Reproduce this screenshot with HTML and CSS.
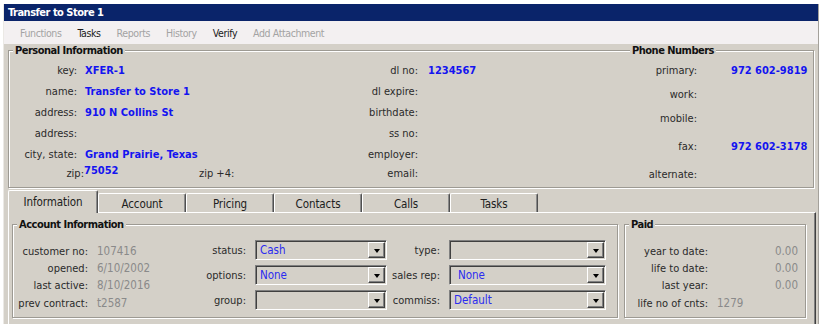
FILE: index.html
```html
<!DOCTYPE html>
<html>
<head>
<meta charset="utf-8">
<link rel="stylesheet" href="styles.css">
</head>
<body>
<div class="window">
  <div class="titlebar">Transfer to Store 1</div>
  <div class="menubar">
    <span class="mi off">Functions</span>
    <span class="mi">Tasks</span>
    <span class="mi off">Reports</span>
    <span class="mi off">History</span>
    <span class="mi">Verify</span>
    <span class="mi off">Add Attachment</span>
  </div>
  <div class="content">
    <div class="group pi">
      <div class="group-head">
        <span class="gh-title first">Personal Information</span>
        <span class="gh-title phone-title">Phone Numbers</span>
      </div>
      <div class="pi-body">
        <div class="pi-main">
          <div class="lbl">key:</div><div class="val blue">XFER-1</div>
          <div class="lbl">dl no:</div><div class="val2 blue">1234567</div>

          <div class="lbl">name:</div><div class="val blue">Transfer to Store 1</div>
          <div class="lbl">dl expire:</div><div class="val2"></div>

          <div class="lbl">address:</div><div class="val blue">910 N Collins St</div>
          <div class="lbl">birthdate:</div><div class="val2"></div>

          <div class="lbl">address:</div><div class="val"></div>
          <div class="lbl">ss no:</div><div class="val2"></div>

          <div class="lbl">city, state:</div><div class="val blue">Grand Prairie, Texas</div>
          <div class="lbl">employer:</div><div class="val2"></div>

          <div class="zip-row">
            <span class="zip-lbl">zip:</span>
            <span class="zip-val blue">75052</span>
            <span class="zip4">zip +4:</span>
          </div>
          <div class="lbl">email:</div><div class="val2"></div>
        </div>
        <div class="pi-phone">
          <div class="lbl">primary:</div><div class="pval blue">972 602-9819</div>
          <div class="lbl">work:</div><div class="pval"></div>
          <div class="lbl">mobile:</div><div class="pval"></div>
          <div class="lbl">fax:</div><div class="pval blue">972 602-3178</div>
          <div class="lbl">alternate:</div><div class="pval"></div>
        </div>
      </div>
    </div>

    <div class="tabs">
      <div class="tab selected">Information</div>
      <div class="tab">Account</div>
      <div class="tab">Pricing</div>
      <div class="tab">Contacts</div>
      <div class="tab">Calls</div>
      <div class="tab">Tasks</div>
    </div>
    <div class="panel">
      <div class="group acct">
        <div class="group-head">
          <span class="gh-title first">Account Information</span>
        </div>
        <div class="acct-body">
          <div class="acct-a">
            <div class="lbl">customer no:</div><div class="gval">107416</div>
            <div class="lbl">opened:</div><div class="gval">6/10/2002</div>
            <div class="lbl">last active:</div><div class="gval">8/10/2016</div>
            <div class="lbl">prev contract:</div><div class="gval">t2587</div>
          </div>
          <div class="acct-b">
            <div class="lbl">status:</div>
            <div class="combo"><span class="ctext">Cash</span><span class="cbtn"><i></i></span></div>
            <div class="lbl">options:</div>
            <div class="combo"><span class="ctext">None</span><span class="cbtn"><i></i></span></div>
            <div class="lbl">group:</div>
            <div class="combo"><span class="ctext"></span><span class="cbtn"><i></i></span></div>
          </div>
          <div class="acct-c">
            <div class="lbl">type:</div>
            <div class="combo wide"><span class="ctext"></span><span class="cbtn"><i></i></span></div>
            <div class="lbl">sales rep:</div>
            <div class="combo wide"><span class="ctext indent">None</span><span class="cbtn"><i></i></span></div>
            <div class="lbl">commiss:</div>
            <div class="combo wide"><span class="ctext">Default</span><span class="cbtn"><i></i></span></div>
          </div>
        </div>
      </div>
      <div class="group paid">
        <div class="group-head">
          <span class="gh-title first">Paid</span>
        </div>
        <div class="paid-body">
          <div class="lbl">year to date:</div><div class="gval num">0.00</div>
          <div class="lbl">life to date:</div><div class="gval num">0.00</div>
          <div class="lbl">last year:</div><div class="gval num">0.00</div>
          <div class="lbl">life no of cnts:</div><div class="gval">1279</div>
        </div>
      </div>
    </div>
  </div>
</div>
</body>
</html>
```
FILE: styles.css
```css
* { box-sizing: border-box; }
html, body {
  margin: 0;
  padding: 0;
  background: #ffffff;
}
body {
  font-family: "DejaVu Sans Condensed", "DejaVu Sans", sans-serif;
  font-size: 11px;
  color: #2a2a2a;
  height: 324px;
  overflow: hidden;
}
.window {
  margin: 4px 0 0 3px;
  width: 816px;
  height: 330px;
  background: #d4d0c8;
  border-left: 1px solid #ebe9e5;
  border-right: 1px solid #a4a19b;
}
.titlebar {
  height: 17px;
  line-height: 17px;
  background: #0a246a;
  color: #ffffff;
  font-weight: bold;
  font-size: 11px;
  letter-spacing: -0.5px;
  padding-left: 4px;
}
.menubar {
  height: 23px;
  background: #f3f0f1;
  display: flex;
  align-items: center;
  gap: 16px;
  padding-left: 16px;
  font-size: 10.5px;
  letter-spacing: -0.4px;
}
.mi { color: #1b1b1b; }
.mi.off { color: #a3a3a3; }

.content {
  padding: 0 4px;
}

/* group boxes */
.group {
  border: 1px solid #9d9a93;
  box-shadow: inset 1px 1px 0 #ffffff, 1px 1px 0 #ffffff;
  margin-top: 6px;
}
.group-head {
  display: flex;
  height: 13px;
  margin-top: -7px;
  line-height: 13px;
  font-weight: bold;
  font-size: 11px;
  letter-spacing: -0.5px;
  color: #111111;
}
.gh-title {
  background: #d4d0c8;
  padding: 0 2px;
}
.gh-title.first { margin-left: 4px; }
.phone-title { margin-left: auto; margin-right: 97px; }

.lbl {
  display: flex;
  align-items: center;
  justify-content: flex-end;
  white-space: nowrap;
}
.blue {
  color: #1414f0;
  font-weight: bold;
}

/* personal info */
.pi-body {
  display: flex;
  height: 130px;
}
.pi-main {
  margin-top: 3px;
  display: grid;
  grid-template-columns: 68px 245px 96px 170px;
  grid-template-rows: 20px 22px 21px 20px 22px 16px;
}
.val, .val2, .pval {
  display: flex;
  align-items: center;
  white-space: nowrap;
}
.val { padding-left: 8px; }
.val2 { padding-left: 10px; }
.pval { padding-left: 34px; }
.zip-row {
  grid-column: 1 / 3;
  display: flex;
  align-items: center;
}
.zip-lbl {
  width: 75px;
  text-align: right;
}
.zip-val {
  width: 115px;
  margin-bottom: 6px;
}
.pi-phone {
  margin-top: 1px;
  display: grid;
  grid-template-columns: 109px 1fr;
  grid-template-rows: 24px 24px 24px 32px 24px;
  flex: 1;
}

/* tabs */
.tabs {
  display: flex;
  align-items: flex-end;
  height: 24px;
  position: relative;
  z-index: 1;
}
.tab {
  width: 88px;
  height: 19px;
  padding-top: 2px;
  line-height: 16px;
  text-align: center;
  font-size: 11.5px;
  letter-spacing: -0.1px;
  color: #202020;
  border-top: 1px solid #ffffff;
  border-left: 1px solid #ffffff;
  border-right: 1px solid #505050;
  box-shadow: inset -1px 0 0 #8a8a8a;
  border-radius: 2px 2px 0 0;
  background: #d4d0c8;
}
.tab.selected {
  width: 90px;
  height: 23px;
  padding-top: 2px;
  line-height: 18px;
  margin-bottom: -1px;
}
.panel {
  display: flex;
  gap: 6px;
  margin-right: -2px;
  height: 120px;
  padding-left: 3px;
  border-top: 1px solid #ffffff;
  border-left: 1px solid #ffffff;
  border-right: 1px solid #404040;
  box-shadow: inset -1px 0 0 #808080;
}
.panel .group {
  margin-top: 11px;
  height: 94px;
}
.acct { width: 606px; }
.paid { width: 182px; }

.gval {
  display: flex;
  align-items: center;
  color: #8a8a8a;
  font-size: 11.5px;
  padding-left: 9px;
  white-space: nowrap;
}

.acct-body {
  display: flex;
}
.acct-a {
  margin-top: 11px;
  width: 177px;
  display: grid;
  grid-template-columns: 75px 1fr;
  grid-template-rows: 18px 16px 18px 18px;
}
.acct-b, .acct-c {
  margin-top: 9px;
  display: grid;
  row-gap: 5px;
  grid-template-rows: 20px 20px 20px;
}
.acct-b { grid-template-columns: 56px 132px; column-gap: 9px; }
.acct-c { grid-template-columns: 53px 157px; column-gap: 9px; }

.combo {
  display: flex;
  align-items: center;
  border: 1px solid;
  border-color: #808080 #ffffff #ffffff #808080;
  box-shadow: inset 1px 1px 0 #404040;
  padding: 1px;
}
.ctext {
  flex: 1;
  padding-left: 3px;
  color: #2b2bf0;
  font-size: 11.5px;
  white-space: nowrap;
}
.ctext.indent { padding-left: 7px; }
.cbtn {
  width: 17px;
  height: 16px;
  border: 1px solid;
  border-color: #ffffff #404040 #404040 #ffffff;
  box-shadow: inset -1px -1px 0 #808080;
  background: #d4d0c8;
  display: flex;
  align-items: center;
  justify-content: center;
}
.cbtn i {
  width: 0;
  height: 0;
  border-left: 3.5px solid transparent;
  border-right: 3.5px solid transparent;
  border-top: 4px solid #000000;
  margin-top: 1px;
}

.paid-body {
  margin-top: 11px;
  display: grid;
  grid-template-columns: 83px 1fr;
  grid-template-rows: 18px 16px 18px 18px;
}
.gval.num {
  justify-content: flex-end;
  padding-right: 7px;
}
```
